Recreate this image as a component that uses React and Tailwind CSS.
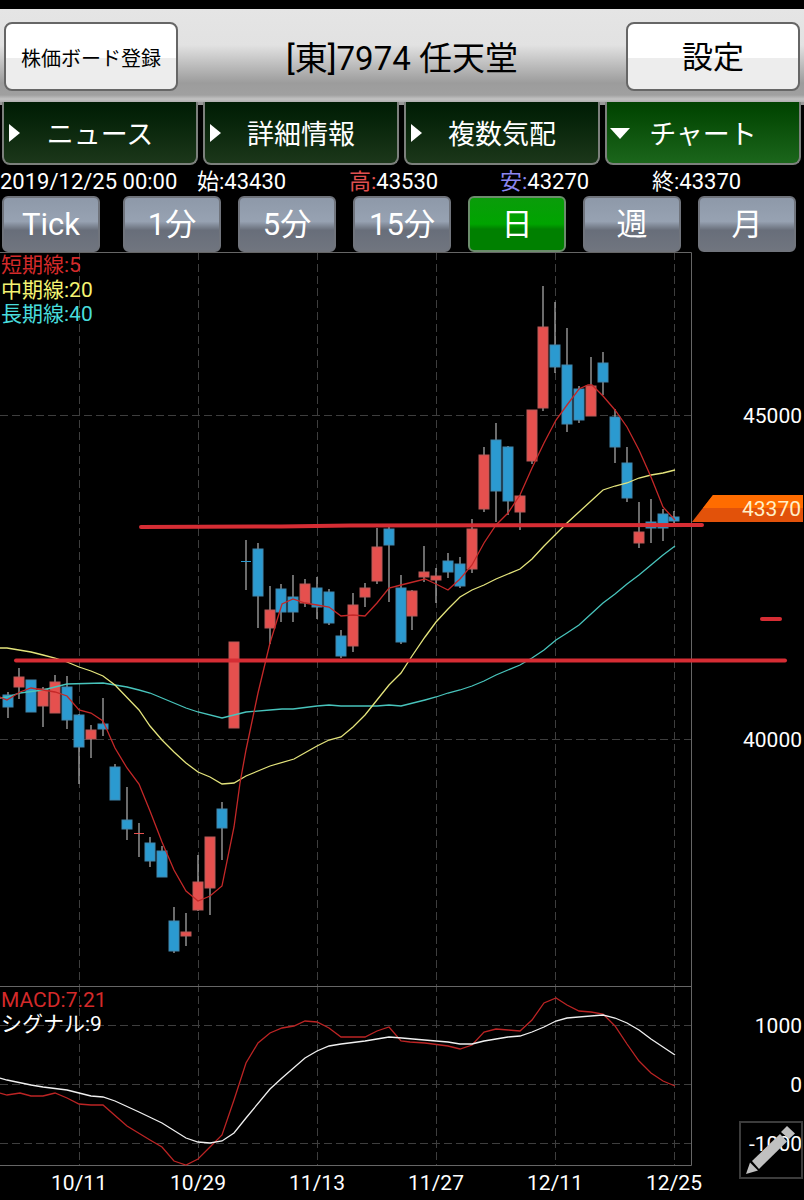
import React from "react";

const tabs = [
  { label: "ニュース", active: false },
  { label: "詳細情報", active: false },
  { label: "複数気配", active: false },
  { label: "チャート", active: true },
];

const intervals = ["Tick", "1分", "5分", "15分", "日", "週", "月"];

const prices = [
  { label: "始", value: "43430", color: "text-white" },
  { label: "高", value: "43530", color: "text-[#e05050]" },
  { label: "安", value: "43270", color: "text-[#8c86f0]" },
  { label: "終", value: "43370", color: "text-white" },
];

// [up, high, body top, body bottom, low] in chart units
const candles = [
  [0, 692, 695, 707, 718],
  [1, 668, 677, 687, 699],
  [0, 680, 680, 712, 712],
  [1, 687, 689, 706, 727],
  [1, 675, 682, 713, 713],
  [0, 676, 687, 720, 729],
  [0, 714, 715, 747, 784],
  [1, 725, 730, 739, 758],
  [0, 698, 724, 729, 736],
  [0, 764, 767, 800, 800],
  [0, 787, 820, 829, 840],
  [1, 823, 833, 834, 857],
  [0, 837, 843, 861, 867],
  [0, 846, 851, 877, 877],
  [0, 907, 921, 951, 953],
  [1, 913, 932, 936, 946],
  [1, 855, 882, 910, 911],
  [1, 837, 837, 888, 915],
  [0, 802, 809, 828, 860],
  [1, 642, 642, 728, 728],
  [0, 540, 561, 562, 590],
  [0, 543, 549, 596, 628],
  [1, 586, 610, 628, 644],
  [0, 584, 589, 612, 622],
  [0, 575, 597, 612, 622],
  [1, 579, 584, 603, 607],
  [0, 577, 588, 607, 619],
  [0, 589, 592, 623, 625],
  [0, 630, 636, 656, 658],
  [1, 593, 605, 646, 652],
  [1, 583, 588, 597, 607],
  [1, 528, 547, 581, 584],
  [0, 527, 529, 545, 602],
  [0, 575, 588, 642, 644],
  [1, 590, 591, 616, 630],
  [1, 546, 572, 577, 582],
  [1, 568, 576, 580, 603],
  [0, 553, 561, 572, 578],
  [0, 557, 564, 586, 588],
  [1, 519, 529, 569, 573],
  [1, 447, 455, 509, 512],
  [0, 423, 440, 491, 522],
  [0, 446, 447, 501, 515],
  [1, 495, 496, 512, 530],
  [1, 410, 410, 461, 464],
  [1, 286, 327, 408, 411],
  [0, 302, 345, 367, 373],
  [0, 328, 365, 424, 432],
  [0, 386, 389, 420, 423],
  [1, 357, 386, 416, 416],
  [0, 352, 363, 382, 395],
  [0, 409, 417, 447, 463],
  [0, 447, 463, 498, 502],
  [1, 502, 532, 543, 548],
  [0, 499, 522, 528, 543],
  [0, 509, 514, 528, 541],
  [0, 511, 517, 521, 523],
];

const shortLine =
  "0,697 7,700 20,692 31,688 43,690 55,692 67,696 79,710 91,713 103,721 115,748 127,768 139,784 150,811 162,842 174,870 186,891 198,901 210,896 222,886 234,827 240,783 246,750 258,693 270,643 282,604 293,599 305,603 317,605 329,607 341,616 353,615 365,616 377,603 389,588 401,585 425,579 436,584 448,590 460,579 472,565 484,543 496,525 508,513 520,495 532,468 544,443 556,420 567,405 579,389 588,385 592,385 603,396 615,410 627,427 639,450 651,477 663,507 675,520";

const middleLine =
  "0,648 7,648 31,652 43,655 55,658 67,662 79,667 91,671 103,676 115,685 139,710 150,726 162,740 174,752 186,763 198,772 210,777 222,784 234,783 246,776 270,766 294,759 317,746 329,740 341,737 353,727 365,715 377,700 389,685 401,673 412,656 425,637 436,622 448,609 460,597 472,590 484,585 496,579 520,569 532,559 544,546 556,534 567,523 579,512 591,501 603,490 615,486 627,483 639,478 651,475 663,473 675,470";

const longLine =
  "0,698 7,697 20,693 43,690 67,684 103,683 115,685 127,687 139,690 150,693 162,698 186,708 198,712 222,718 234,715 246,712 270,710 282,709 293,709 317,706 329,705 341,706 377,706 389,705 401,706 425,700 436,697 448,693 460,690 472,686 484,681 496,675 520,665 532,658 544,650 556,640 567,633 579,625 591,614 603,603 615,594 627,584 639,575 651,565 663,555 675,546";

const macdLine =
  "0,1093 7,1095 20,1093 31,1096 43,1096 55,1093 67,1098 79,1104 91,1105 103,1105 127,1126 150,1140 162,1147 174,1161 186,1165 198,1159 210,1147 222,1135 234,1100 246,1063 258,1043 270,1033 282,1028 294,1026 305,1021 317,1022 329,1028 341,1037 365,1037 377,1031 389,1027 401,1041 410,1042 425,1043 448,1046 460,1049 472,1045 484,1032 496,1029 508,1030 520,1031 532,1020 544,1003 556,998 567,1005 579,1011 591,1012 603,1014 615,1026 627,1044 639,1061 651,1073 663,1081 675,1086";

const signalLine =
  "0,1078 7,1080 31,1085 43,1087 67,1090 79,1093 91,1096 103,1097 115,1101 139,1112 162,1123 186,1138 198,1142 210,1143 222,1141 234,1133 246,1118 270,1089 282,1078 305,1058 317,1051 329,1046 341,1044 365,1041 377,1039 389,1037 402,1038 413,1039 436,1041 448,1042 460,1044 472,1044 484,1041 508,1037 520,1036 532,1032 544,1027 556,1021 567,1018 603,1015 615,1018 627,1023 639,1030 651,1039 663,1047 675,1055";

const dates = [
  [79, "10/11"],
  [198, "10/29"],
  [317, "11/13"],
  [436, "11/27"],
  [555, "12/11"],
  [674, "12/25"],
];

const levels = [
  [415, "45000"],
  [739, "40000"],
  [1025, "1000"],
  [1084, "0"],
  [1143, "-1000"],
];

const legends = [
  [272, "短期線:5", "#d42a2a"],
  [297, "中期線:20", "#f4f472"],
  [321, "長期線:40", "#48dcdc"],
  [1007, "MACD:7.21", "#d42a2a"],
  [1031, "シグナル:9", "#ffffff"],
];

function Header() {
  return (
    <header className="flex items-center justify-between border-t-[9px] border-black bg-[linear-gradient(#e5e5e5_0,#e2e2e2_36px,#9c9c9c_74px,#a0a0a0_86px,#c2c2c2_90px,#b0b0b0_93px)] px-1 pt-[13px] pb-[11px] text-black">
      <button className="h-[69px] w-[174px] rounded-lg border-2 border-[#666] bg-[linear-gradient(#fff_52%,#ededed_52%)] pt-1 text-[20px]">
        株価ボード登録
      </button>
      <h1 className="pt-1 text-[33px] leading-none">[東]7974 任天堂</h1>
      <button className="h-[69px] w-[174px] rounded-lg border-2 border-[#666] bg-[linear-gradient(#fff_52%,#ededed_52%)] pt-1 text-[31px]">
        設定
      </button>
    </header>
  );
}

function TabBar() {
  return (
    <nav className="grid grid-cols-4 gap-[5px] bg-[linear-gradient(#999_3px,#000_3px)] pr-[3px] pl-[2px]">
      {tabs.map((tab) => (
        <button
          key={tab.label}
          className={`relative h-[63px] rounded-b-lg border-2 border-t-0 border-[#7c807c] pt-1.5 text-[27px] ${
            tab.active
              ? "bg-linear-to-b from-[#004200] to-[#1b661b]"
              : "bg-linear-to-b from-[#001c04] to-[#1c371a]"
          }`}
        >
          {/* Open / closed marker */}
          <svg
            className="absolute top-[21px] left-[3px]"
            width="22"
            height="20"
            fill="white"
            aria-hidden="true"
          >
            {tab.active ? (
              <path d="M0 5h20L10 16z" />
            ) : (
              <path d="M2 1v18l11-9z" />
            )}
          </svg>
          {tab.label}
        </button>
      ))}
    </nav>
  );
}

function PriceRow() {
  return (
    <div className="grid h-[31px] grid-cols-[197fr_152fr_151fr_152fr_152fr] items-center pt-0.5 text-[22px] leading-none whitespace-nowrap">
      <span>2019/12/25 00:00</span>
      {prices.map((price) => (
        <span key={price.label}>
          <span className={price.color}>{price.label}:</span>
          {price.value}
        </span>
      ))}
    </div>
  );
}

function IntervalBar() {
  return (
    <div className="flex justify-between pr-2 pl-[2px]">
      {intervals.map((interval) => (
        <button
          key={interval}
          className={`h-14 w-[98px] rounded-md border-2 pt-0.5 text-[31px] first:mr-1.5 ${
            interval === "日"
              ? "border-[#6c8c6c] bg-[linear-gradient(#0a9c0a_0,#00a400_50%,#008000_60%,#008000)]"
              : "border-[#70747c] bg-[linear-gradient(#8e99a9_0,#97a2b2_45%,#686e7a_62%,#70757f)]"
          }`}
        >
          {interval}
        </button>
      ))}
    </div>
  );
}

function Chart() {
  return (
    <svg
      viewBox="0 252 804 948"
      className="block w-full"
      fontSize="21"
      fill="white"
      role="img"
      aria-label="任天堂 日足チャート"
    >
      {/* Grid */}
      <g stroke="#3e3e3e" strokeDasharray="8 4">
        {dates.map(([x]) => (
          <path key={x} d={`M${x + 0.5} 252V1165`} />
        ))}
        {levels.map(([y]) => (
          <path key={y} d={`M0 ${y + 0.5}H691`} />
        ))}
      </g>
      <path
        d="M0 252.5H691.5V1165.5H0M0 986.5H691"
        fill="none"
        stroke="#666"
      />

      {/* Candles */}
      {candles.map(([up, high, top, bottom, low], i) => {
        const x = Math.round(7.5 + i * 11.91);
        return (
          <g key={i}>
            <path
              d={`M${x} ${high}V${low}`}
              stroke="#b4b4b4"
              strokeWidth="1.2"
            />
            <rect
              x={x - 5}
              y={top}
              width="10"
              height={bottom - top}
              fill={up ? "#e5504e" : "#2b9ad0"}
              stroke={up ? "#b85a58" : "#4286ac"}
              strokeWidth={bottom - top > 1 ? 1 : 0}
            />
          </g>
        );
      })}

      {/* Moving averages */}
      <g fill="none" strokeWidth="1.3">
        <polyline points={longLine} stroke="#48c4bc" />
        <polyline points={middleLine} stroke="#e4e47c" />
        <polyline points={shortLine} stroke="#c42828" />
        <polyline points={macdLine} stroke="#bc2424" />
        <polyline points={signalLine} stroke="#f0f0f0" />
      </g>

      {/* Axis labels */}
      {levels.map(([y, label]) => (
        <text key={label} x="802" y={y + 8} textAnchor="end">
          {label}
        </text>
      ))}
      {dates.map(([x, label]) => (
        <text key={label} x={x} y="1190" textAnchor="middle">
          {label}
        </text>
      ))}
      {legends.map(([y, label, color]) => (
        <text key={label} x="1" y={y} fill={color}>
          {label}
        </text>
      ))}

      {/* Last price */}
      <path d="M692 522L713 495H803V522z" fill="#e2520a" />
      <path d="M703 508L713 495H803V508z" fill="#ff6c00" />
      <text x="801" y="516" textAnchor="end" fill="#fff0c8">
        43370
      </text>

      {/* Lines drawn by the user */}
      <g stroke="#d62d34" strokeWidth="4" strokeLinecap="round" fill="none">
        <path d="M141 527L281 526.5L350 525.5L702 525" />
        <path d="M16 660.5H785" />
        <path d="M762 619H780" />
      </g>
    </svg>
  );
}

function App() {
  return (
    <main className="min-h-screen bg-black font-['Roboto','Noto_Sans_CJK_JP',sans-serif] text-white">
      <Header />
      <TabBar />
      <PriceRow />
      <IntervalBar />
      <div className="relative">
        <Chart />
        <button
          aria-label="描画"
          className="absolute right-px bottom-[21px] h-[58px] w-16 border-2 border-[#3c3c3c]"
        >
          <svg viewBox="2 2 60 54" className="h-full w-full" fill="#c0c0c0">
            <path d="M48 5L56 12.500L50 18L42 11z" />
            <path d="M41 13L48 20.500L20 48L13 40z" />
            <path d="M11 41.500L19 49.500L7 53z" />
          </svg>
        </button>
      </div>
    </main>
  );
}

export default App;
